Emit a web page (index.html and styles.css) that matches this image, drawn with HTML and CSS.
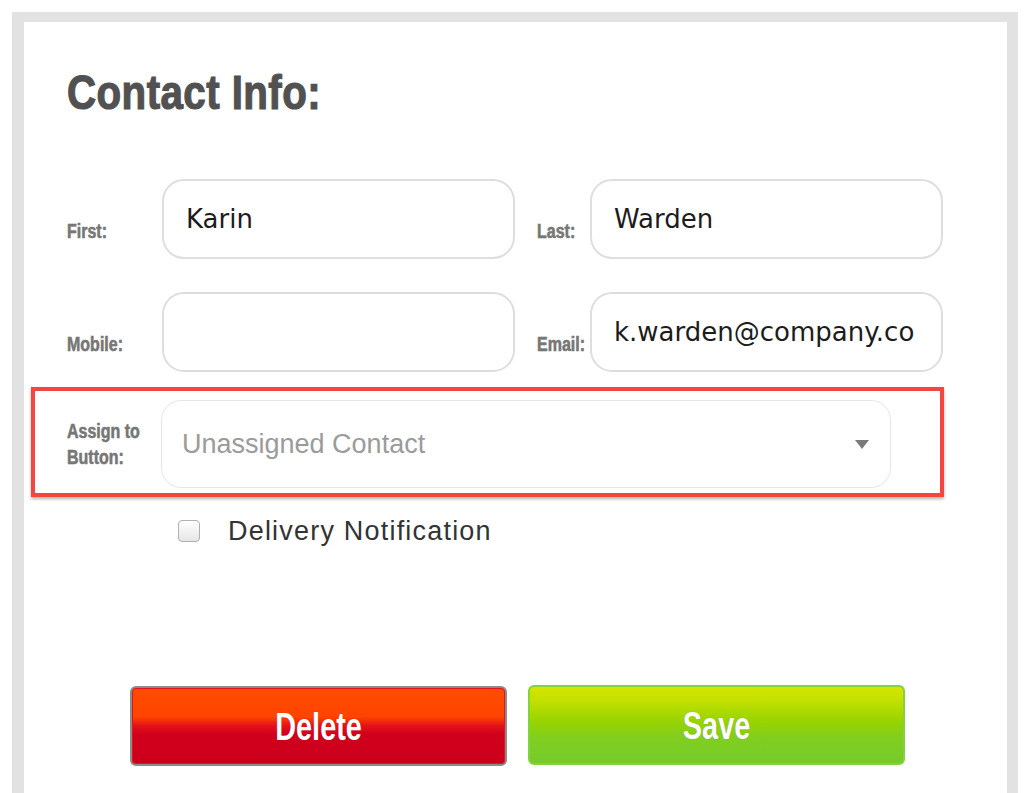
FILE: index.html
```html
<!DOCTYPE html>
<html>
<head>
<meta charset="utf-8">
<title>Contact Info</title>
<link rel="stylesheet" href="styles.css">
</head>
<body>
<div class="panel">
  <h1 class="title"><span>Contact Info:</span></h1>
  <div class="grid">
    <label class="lbl"><span>First:</span></label>
    <input class="field" type="text" value="Karin">
    <label class="lbl lbl-r"><span>Last:</span></label>
    <input class="field" type="text" value="Warden">
    <label class="lbl"><span>Mobile:</span></label>
    <input class="field" type="text" value="">
    <label class="lbl lbl-r"><span>Email:</span></label>
    <input class="field" type="text" value="k.warden@company.co">
  </div>
  <div class="assign">
    <label class="lbl2"><span>Assign to<br>Button:</span></label>
    <div class="select">
      <span>Unassigned Contact</span>
      <svg class="arrow" width="14" height="9" viewBox="0 0 14 9"><polygon points="0,0 14,0 7,9" fill="#7a7a7a"/></svg>
    </div>
  </div>
  <div class="notify">
    <input type="checkbox" class="check">
    <span class="notify-text">Delivery Notification</span>
  </div>
  <div class="actions">
    <button class="btn del"><span>Delete</span></button>
    <button class="btn save"><span>Save</span></button>
  </div>
</div>
</body>
</html>
```

FILE: styles.css
```css
html, body {
  margin: 0;
  padding: 0;
  background: #fff;
  height: 793px;
  overflow: hidden;
}

.panel {
  margin: 12px 0 0 12px;
  width: 1006px;
  height: 781px;
  box-sizing: border-box;
  border-style: solid;
  border-color: #e2e2e2;
  border-width: 10px 11px 0 12px;
  background: #fff;
  padding: 47px 0 0 7px;
}

.title {
  margin: 0 0 0 36px;
  height: 48px;
  font: bold 48px/48px "Liberation Sans", Arial, sans-serif;
  color: #515151;
  white-space: nowrap;
}
.title span {
  display: inline-block;
  transform: scaleX(0.84);
  transform-origin: left center;
  -webkit-text-stroke: 1.2px #515151;
  letter-spacing: 0.5px;
}

.grid {
  margin-top: 62px;
  padding-left: 36px;
  display: grid;
  grid-template-columns: 95px 353px 75px 353px;
  grid-auto-rows: 80px;
  row-gap: 33px;
}

.lbl {
  align-self: end;
  padding-bottom: 18px;
  font: bold 20px/20px "Liberation Sans", Arial, sans-serif;
  color: #777;
  white-space: nowrap;
}
.lbl span, .lbl2 span {
  display: inline-block;
  transform: scaleX(0.8);
  transform-origin: left center;
  -webkit-text-stroke: 0.4px #777;
  text-shadow: 0 0 1px rgba(90, 90, 90, 0.35);
}
.lbl-r {
  padding-left: 22px;
}

.field {
  width: 353px;
  height: 80px;
  box-sizing: border-box;
  border: 2px solid #dedede;
  border-radius: 22px;
  padding: 0 22px;
  margin: 0;
  font: 26px "DejaVu Sans", sans-serif;
  color: #1c1c1c;
  background: #fff;
  outline: none;
}

.assign {
  margin-top: 15px;
  width: 913px;
  box-sizing: border-box;
  border: 4px solid #f3463e;
  padding: 9px 0 5px 32px;
  display: flex;
  align-items: center;
  box-shadow: 0 2px 3px rgba(0, 0, 0, 0.3);
}
.lbl2 {
  width: 94px;
  flex: none;
  font: bold 20px/26px "Liberation Sans", Arial, sans-serif;
  color: #777;
  white-space: nowrap;
}
.select {
  width: 730px;
  height: 88px;
  box-sizing: border-box;
  border: 1px solid #e6e6e6;
  border-radius: 20px;
  padding: 0 21px 0 20px;
  display: flex;
  align-items: center;
  justify-content: space-between;
  font: 27px "Liberation Sans", Arial, sans-serif;
  color: #9b9b9b;
}
.arrow {
  display: block;
}

.notify {
  margin-top: 18px;
  height: 32px;
  padding-left: 147px;
  display: flex;
  align-items: center;
}
.check {
  -webkit-appearance: none;
  appearance: none;
  margin: 0;
  width: 22px;
  height: 22px;
  box-sizing: border-box;
  border: 1px solid #b0b0b0;
  border-radius: 4px;
  background: linear-gradient(#ffffff, #e6e6e6);
  box-shadow: inset 0 1px 1px rgba(255,255,255,0.8);
}
.notify-text {
  margin-left: 28px;
  font: 27px "Liberation Sans", Arial, sans-serif;
  letter-spacing: 1.2px;
  color: #333;
}

.actions {
  margin-top: 139px;
  padding-left: 99px;
  display: flex;
  align-items: flex-start;
  gap: 21px;
}
.btn {
  margin: 0;
  padding: 0;
  height: 80px;
  box-sizing: border-box;
  border-radius: 6px;
  font: bold 39px/1 "Liberation Sans", Arial, sans-serif;
  color: #fff;
  cursor: pointer;
}
.btn span {
  display: inline-block;
  transform: scaleX(0.74);
  text-shadow: 0 0 1px rgba(0, 0, 0, 0.25);
}
.del {
  width: 377px;
  border: 2px solid #8c8c8c;
  box-shadow: inset 0 0 0 1px #e8101c;
  background: linear-gradient(to bottom, #ff4c00 0%, #ff4400 38%, #e4101a 50%, #d0001c 62%, #cc001c 100%);
}
.save {
  width: 377px;
  margin-top: -1px;
  border: 2px solid #82d23c;
  background: linear-gradient(to bottom, #d4e600 0%, #c2e000 18%, #98d400 45%, #80ce20 68%, #76cb2c 100%);
}
```
